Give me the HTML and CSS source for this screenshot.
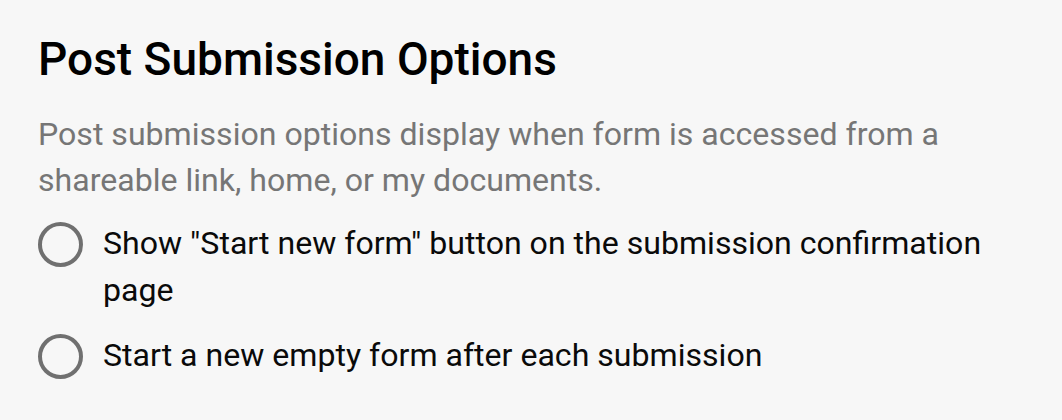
FILE: index.html
```html
<!DOCTYPE html>
<html>
<head>
<meta charset="utf-8">
<link rel="stylesheet" href="styles.css">
</head>
<body>
<section class="panel">
  <h2 class="title">Post Submission Options</h2>
  <p class="desc">Post submission options display when form is accessed from a shareable link, home, or my documents.</p>
  <ul class="options">
    <li class="option">
      <span class="radio"></span>
      <span class="label">Show "Start new form" button on the submission confirmation page</span>
    </li>
    <li class="option">
      <span class="radio"></span>
      <span class="label">Start a new empty form after each submission</span>
    </li>
  </ul>
</section>
</body>
</html>
```
FILE: styles.css
```css
html, body {
  margin: 0;
  padding: 0;
  background: #f7f7f7;
}
body {
  font-family: Roboto, "Liberation Sans", sans-serif;
  width: 1062px;
  height: 420px;
  overflow: hidden;
}
.panel {
  padding: 32px 38px 0 38px;
  width: 960px;
}
.title {
  margin: 0;
  font-size: 46px;
  font-weight: 500;
  line-height: 54px;
  color: #000;
}
.desc {
  margin: 25px 0 0 0;
  font-size: 32.1px;
  line-height: 46px;
  color: #767676;
}
.options {
  list-style: none;
  margin: 17px 0 0 0;
  padding: 0;
}
.option {
  display: flex;
  align-items: flex-start;
  gap: 20px;
  margin-bottom: 18px;
}
.radio {
  flex: none;
  width: 45px;
  height: 45px;
  box-sizing: border-box;
  border: 4px solid #707070;
  border-radius: 50%;
  margin-top: 2px;
}
.label {
  font-size: 32.1px;
  line-height: 47px;
  color: #0a0a0a;
}
```
